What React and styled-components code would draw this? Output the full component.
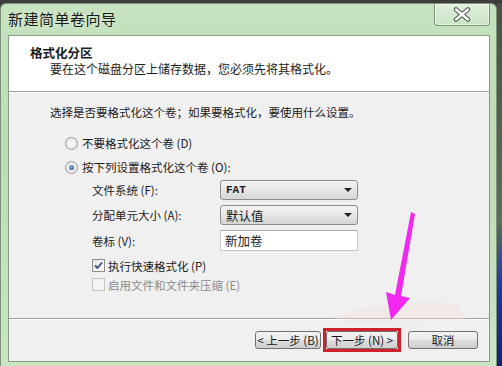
import React from 'react';
import styled, { createGlobalStyle } from 'styled-components';

const Global = createGlobalStyle`
  html, body { margin: 0; padding: 0; }
  body {
    width: 502px;
    height: 366px;
    overflow: hidden;
    background: #2a2d2a;
    font-family: "Noto Sans CJK SC", "Liberation Sans", sans-serif;
    font-size: 11.5px;
    color: #1b1b1b;
  }
`;

const Screen = styled.div`
  position: relative;
  display: flex;
  width: 502px;
  height: 366px;
  padding-top: 3px;
  box-sizing: border-box;
  background: #3b3e3b;
`;

const Window = styled.div`
  display: flex;
  flex-direction: column;
  width: 497px;
  height: 363px;
  background: linear-gradient(180deg, #c6e2bf 0%, #bcdcb4 40%, #c9e5c2 100%);
  border-radius: 6px 6px 0 0;
  border: 1px solid #7d9278;
  border-bottom: none;
  box-sizing: border-box;
`;

const Edge = styled.div`
  width: 5px;
  background: linear-gradient(180deg, #4a4f49 0%, #5d6d5a 60%, #1d3aa0 78%, #0e2570 100%);
`;

const TitleBar = styled.div`
  display: flex;
  align-items: flex-start;
  height: 31px;
  padding-left: 7px;
`;

const Title = styled.div`
  margin-top: 4px;
  font-size: 15px;
  color: #1a1a1a;
  letter-spacing: 0.5px;
  text-shadow: 0 0 6px #e8f5e4;
`;

const CloseButton = styled.div`
  margin-left: auto;
  margin-right: 6px;
  width: 54px;
  height: 21px;
  display: flex;
  align-items: center;
  justify-content: center;
  border: 1px solid #7f9579;
  border-top: none;
  border-radius: 0 0 4px 4px;
  background: linear-gradient(180deg, rgba(255,255,255,0.45), rgba(210,232,205,0.5));
  box-shadow: inset 0 0 0 1px rgba(255,255,255,0.5);
`;

const Client = styled.div`
  display: flex;
  flex-direction: column;
  margin: 0 6px 0 7px;
  height: 325px;
  border: 1px solid #8a9b86;
  background: #f0f0f0;
`;

const Header = styled.div`
  background: #ffffff;
  height: 56px;
  padding: 8px 0 0 21px;
  box-sizing: border-box;
  border-bottom: 1px solid #a0a0a0;
  box-shadow: 0 1px 0 #ffffff;
  font-size: 12px;
`;

const HeaderTitle = styled.div`
  font-weight: bold;
  font-size: 12.5px;
  line-height: 17px;
`;

const HeaderSub = styled.div`
  padding-left: 20px;
  line-height: 16px;
`;

const Body = styled.div`
  flex: 1;
  padding: 12px 0 0 41px;
  box-sizing: border-box;
`;

const Prompt = styled.div`
  line-height: 16px;
  margin-bottom: 15px;
`;

const Options = styled.div`
  padding-left: 15px;
  display: flex;
  flex-direction: column;
  gap: 8px;
`;

const RadioRow = styled.label`
  display: flex;
  align-items: center;
  gap: 4px;
  height: 16px;
`;

const Radio = styled.span`
  width: 11px;
  height: 11px;
  border-radius: 50%;
  border: 1px solid #9a9a9a;
  background: radial-gradient(circle, #ffffff 0%, #dcdcdc 100%);
  display: flex;
  align-items: center;
  justify-content: center;
  &::after {
    content: '';
    width: 5px;
    height: 5px;
    border-radius: 50%;
    background: ${p => (p.$on ? 'radial-gradient(circle at 40% 35%, #7fb1e8, #1c4f93)' : 'transparent')};
  }
`;

const Fields = styled.div`
  display: grid;
  grid-template-columns: 128px 138px;
  row-gap: 5px;
  padding-left: 27px;
  margin-top: -3px;
  align-items: center;
`;

const FieldLabel = styled.div`
  line-height: 18px;
`;

const Select = styled.div`
  height: 18px;
  display: flex;
  align-items: center;
  padding: 0 5px;
  border: 1px solid #8d8d8d;
  border-radius: 3px;
  background: linear-gradient(180deg, #f4f4f4 0%, #e6e6e6 50%, #d6d6d6 100%);
  font-family: ${p => (p.$mono ? '"Liberation Mono", monospace' : 'inherit')};
  font-weight: ${p => (p.$mono ? 'bold' : 'normal')};
  font-size: ${p => (p.$mono ? '11px' : '12.5px')};
  &::after {
    content: '';
    margin-left: auto;
    border-left: 4px solid transparent;
    border-right: 4px solid transparent;
    border-top: 4px solid #222;
  }
`;

const TextBox = styled.div`
  height: 19px;
  display: flex;
  align-items: center;
  padding: 0 4px;
  border: 1px solid #c9c9c9;
  border-top-color: #abadb3;
  background: #ffffff;
  font-size: 12.5px;
`;

const Checks = styled.div`
  display: flex;
  flex-direction: column;
  gap: 4px;
  padding-left: 42px;
  margin-top: 7px;
`;

const CheckRow = styled.label`
  display: flex;
  align-items: center;
  gap: 3px;
  height: 15px;
  color: ${p => (p.$disabled ? '#8b8b8b' : '#1b1b1b')};
`;

const Box = styled.span`
  width: 11px;
  height: 11px;
  border: 1px solid ${p => (p.$disabled ? '#c4c4c4' : '#8f8f8f')};
  background: ${p => (p.$disabled ? '#f4f4f4' : 'linear-gradient(135deg, #e2e2e2, #ffffff)')};
  display: flex;
  align-items: center;
  justify-content: center;
`;

const Footer = styled.div`
  height: 42px;
  border-top: 1px solid #a0a0a0;
  box-shadow: inset 0 1px 0 #ffffff;
  display: flex;
  align-items: center;
  justify-content: flex-end;
  padding-right: 11px;
  gap: 2px;
`;

const Button = styled.div`
  box-sizing: border-box;
  width: ${p => p.$w}px;
  height: 18px;
  display: flex;
  align-items: center;
  justify-content: center;
  border: 1px solid #707070;
  border-radius: 3px;
  background: linear-gradient(180deg, #f2f2f2 0%, #ebebeb 50%, #dddddd 51%, #cfcfcf 100%);
  margin-left: ${p => p.$gap || 0}px;
  font-size: 11.5px;
  white-space: nowrap;
`;

const Highlight = styled.div`
  border: 3px solid #d0202a;
  display: flex;
`;

const Arrow = styled.svg`
  position: absolute;
  left: 0;
  top: 0;
  pointer-events: none;
`;

export default function App() {
  return (
    <>
      <Global />
      <Screen>
        <Window>
          <TitleBar>
            <Title>新建简单卷向导</Title>
            <CloseButton>
              <svg width="22" height="15" viewBox="0 0 22 15">
                <path d="M5 2.5 L17 12.5 M17 2.5 L5 12.5" stroke="#4d5a4a" strokeWidth="4.5" strokeLinecap="round" />
                <path d="M5 2.5 L17 12.5 M17 2.5 L5 12.5" stroke="#ffffff" strokeWidth="2.4" strokeLinecap="round" />
              </svg>
            </CloseButton>
          </TitleBar>
          <Client>
            <Header>
              <HeaderTitle>格式化分区</HeaderTitle>
              <HeaderSub>要在这个磁盘分区上储存数据，您必须先将其格式化。</HeaderSub>
            </Header>
            <Body>
              <Prompt>选择是否要格式化这个卷；如果要格式化，要使用什么设置。</Prompt>
              <Options>
                <RadioRow><Radio />不要格式化这个卷 (D)</RadioRow>
                <RadioRow><Radio $on />按下列设置格式化这个卷 (O):</RadioRow>
                <Fields>
                  <FieldLabel>文件系统 (F):</FieldLabel>
                  <Select $mono>FAT</Select>
                  <FieldLabel>分配单元大小 (A):</FieldLabel>
                  <Select>默认值</Select>
                  <FieldLabel>卷标 (V):</FieldLabel>
                  <TextBox>新加卷</TextBox>
                </Fields>
              </Options>
              <Checks>
                <CheckRow>
                  <Box>
                    <svg width="9" height="9" viewBox="0 0 9 9">
                      <path d="M1 4.5 L3.5 7 L8 1.5" stroke="#2d4f8a" strokeWidth="1.8" fill="none" />
                    </svg>
                  </Box>
                  执行快速格式化 (P)
                </CheckRow>
                <CheckRow $disabled><Box $disabled />启用文件和文件夹压缩 (E)</CheckRow>
              </Checks>
            </Body>
            <Footer>
              <Button $w={66}>&lt; 上一步 (B)</Button>
              <Highlight>
                <Button $w={72}>下一步 (N) &gt;</Button>
              </Highlight>
              <Button $w={70} $gap={5}>取消</Button>
            </Footer>
          </Client>
        </Window>
        <Edge />
        <Arrow width="502" height="366" viewBox="0 0 502 366">
          <path d="M335 318 Q 380 298 458 304 L 466 320 L 350 322 Z" fill="#f3dede" opacity="0.45" />
          <path d="M411 212 L415 214 L401 296 L410 298 L391 320 L386 292 L395 295 Z" fill="#f028f0" />
        </Arrow>
      </Screen>
    </>
  );
}
